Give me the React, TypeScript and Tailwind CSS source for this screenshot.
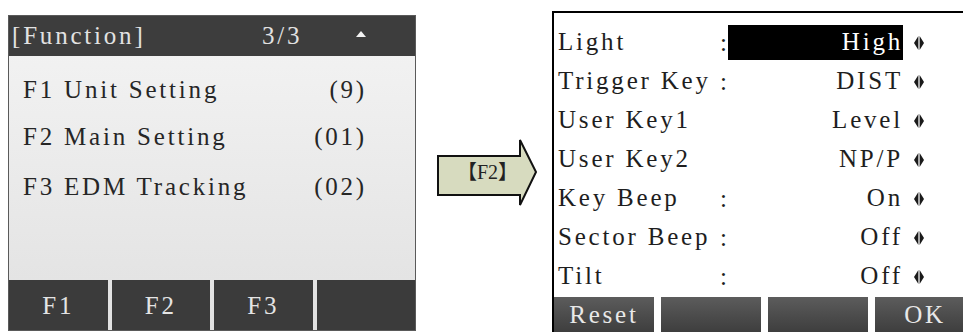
import * as React from 'react';

// SimSun-like look: wide tracked serif text
const T = ({ children, className = '' }: any) => (
    <span className={`inline-block whitespace-pre leading-none tracking-[2.8px] ${className}`}>
        {children}
    </span>
);

const Spin = () => (
    <svg width="10" height="14" viewBox="0 0 10 14" className="shrink-0">
        <polygon points="0,7 4.4,0 4.4,14" fill="#1a1a1a" />
        <polygon points="5.6,0 10,7 5.6,14" fill="#1a1a1a" />
    </svg>
);

const settings = [
    { label: 'Light', colon: true, value: 'High', active: true },
    { label: 'Trigger Key', colon: true, value: 'DIST' },
    { label: 'User Key1', colon: false, value: 'Level' },
    { label: 'User Key2', colon: false, value: 'NP/P' },
    { label: 'Key Beep', colon: true, value: 'On' },
    { label: 'Sector Beep', colon: true, value: 'Off' },
    { label: 'Tilt', colon: true, value: 'Off' },
];

const functions = [
    { name: 'F1 Unit Setting', value: '(9)', h: 'h-[46px]' },
    { name: 'F2 Main Setting', value: '(01)', h: 'h-[48px]' },
    { name: 'F3 EDM Tracking', value: '(02)', h: 'h-[52px]' },
];

function FunctionScreen() {
    return (
        <div className="mt-[15px] ml-[8px] w-[408px] h-[316px] shrink-0 flex flex-col border border-[#5a5a5a] bg-gradient-to-b from-[#f4f4f4] to-[#e1e1e1]">
            <div className="h-[40px] flex items-center pl-[3px] pb-[2px] bg-[#3d3d3d] text-[#e2e2e2]">
                <T className="w-[250px]">[Function]</T>
                <T>3/3</T>
                <svg width="10" height="6" viewBox="0 0 10 6" className="ml-[54px] mb-[2px]">
                    <polygon points="5,0 10,6 0,6" fill="#f2f2f2" />
                </svg>
            </div>
            <div className="flex-1 pt-[10px] text-[#262626]">
                {functions.map((f) => (
                    <div key={f.name} className={`${f.h} flex items-center pl-[14px] pr-[48px] justify-between`}>
                        <T>{f.name}</T>
                        <T>{f.value}</T>
                    </div>
                ))}
            </div>
            <div className="h-[50px] grid grid-cols-4 gap-[4px] text-[#e4e4e4]">
                {['F1', 'F2', 'F3', ''].map((k, i) => (
                    <div key={i} className="bg-[#3b3b3b] flex items-center justify-center">
                        <T>{k}</T>
                    </div>
                ))}
            </div>
        </div>
    );
}

function KeyArrow() {
    return (
        <div className="relative mt-[139px] ml-[21px] w-[101px] h-[68px] shrink-0">
            <svg width="101" height="68" viewBox="0 0 101 68" className="absolute inset-0">
                <polygon
                    points="1,17 83,17 83,1 99,33 83,66 83,56 1,56"
                    fill="#d7dbbf"
                    stroke="#111"
                    strokeWidth="2"
                    strokeLinejoin="miter"
                />
            </svg>
            <div className="relative h-full flex items-center pl-[20px] pb-[2px] text-[#222] text-[20px] font-['Liberation_Serif','Noto_Sans_CJK_SC',serif]">
                <span className="leading-none">【F2】</span>
            </div>
        </div>
    );
}

function SettingsScreen() {
    return (
        <div className="mt-[11px] ml-[14px] w-[440px] h-[340px] shrink-0 border-l-2 border-t-2 border-black bg-white flex flex-col">
            <div className="pt-[10px] pb-[1px] text-[#1e1e1e]">
                {settings.map((s) => (
                    <div key={s.label} className="h-[39px] flex items-center pl-[4px]">
                        <T className="w-[162px] pb-[2px]">{s.label}</T>
                        <T className="w-[8px]">{s.colon ? ':' : ' '}</T>
                        <div
                            className={`w-[175px] h-[35px] flex items-center justify-end -mr-[1px] pb-[2px] ${
                                s.active ? 'bg-black text-white' : ''
                            }`}
                        >
                            <T>{s.value}</T>
                        </div>
                        <div className="ml-[12px]">
                            <Spin />
                        </div>
                    </div>
                ))}
            </div>
            <div className="h-[40px] flex gap-[7px] text-[#e8e8e8]">
                {['Reset', '', '', 'OK'].map((k, i) => (
                    <div
                        key={i}
                        className="w-[100px] shrink-0 flex items-center justify-center pb-[6px] bg-gradient-to-b from-[#5c5c5c] to-[#3a3a3a]"
                    >
                        <T>{k}</T>
                    </div>
                ))}
            </div>
        </div>
    );
}

export default function App() {
    return (
        <div className="w-[963px] h-[332px] overflow-hidden bg-white flex items-start font-['Liberation_Serif',serif] text-[25px]">
            <FunctionScreen />
            <KeyArrow />
            <SettingsScreen />
        </div>
    );
}
